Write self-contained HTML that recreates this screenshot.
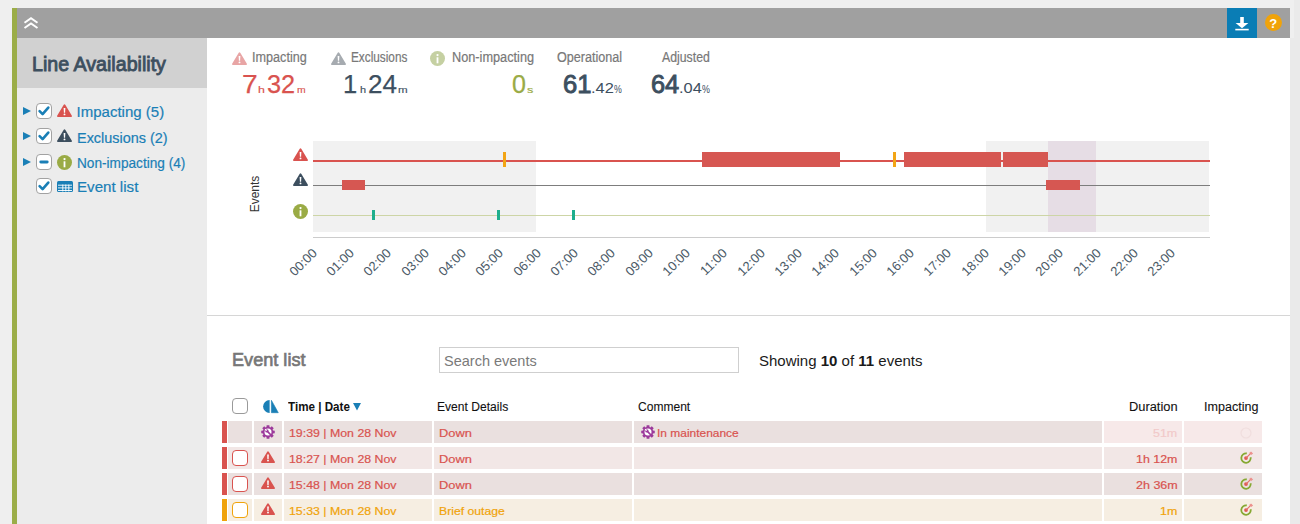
<!DOCTYPE html>
<html><head><meta charset="utf-8"><style>
html,body{margin:0;padding:0;}
body{width:1300px;height:524px;overflow:hidden;background:#efefef;position:relative;font-family:"Liberation Sans", sans-serif;}
.t{position:absolute;white-space:nowrap;}
.r{position:absolute;}
.s{position:absolute;overflow:visible;}
</style></head><body>
<div class="r" style="left:1294px;top:0px;width:6px;height:524px;background:#eaeaea;"></div>
<div class="r" style="left:1290px;top:38px;width:4px;height:486px;background:#eaeaea;"></div>
<div class="r" style="left:12px;top:8px;width:5px;height:516px;background:#9bad48;"></div>
<div class="r" style="left:17px;top:8px;width:1273px;height:30px;background:#a0a0a0;"></div>
<div class="r" style="left:17px;top:38px;width:190px;height:50px;background:#d1d1d1;"></div>
<div class="r" style="left:17px;top:88px;width:190px;height:436px;background:#ececec;"></div>
<div class="r" style="left:207px;top:38px;width:1083px;height:486px;background:#ffffff;"></div>
<svg class="s" style="left:22.5px;top:16px;" width="16" height="14" viewBox="0 0 16 14"><path d="M1.5 6.8 L8 2.3 L14.5 6.8 M1.5 12 L8 7.5 L14.5 12" fill="none" stroke="#fff" stroke-width="2"/></svg>
<div class="r" style="left:1227px;top:8px;width:30px;height:30px;background:#0a7db5;"></div>
<svg class="s" style="left:1235px;top:16px;" width="14" height="15" viewBox="0 0 14 15"><rect x="5.2" y="1" width="3.6" height="6.5" fill="#fff"/><path d="M0.6 7 H13.4 L7 12.2 Z" fill="#fff"/><rect x="0.3" y="12.8" width="13.4" height="1.6" fill="#fff"/></svg>
<svg class="s" style="left:1265px;top:14px;" width="17" height="17" viewBox="0 0 17 17"><circle cx="8.5" cy="8.5" r="8.5" fill="#f0a30a"/></svg>
<div class="t" style="top:17.00px;font-size:13px;line-height:13px;color:#fff;font-weight:700;left:1269.30px;">?</div>
<div class="t" style="left:31.59px;top:53.00px;font-size:21px;line-height:21px;color:#3d4f5f;transform:scaleX(0.9351);transform-origin:0 17.78px;-webkit-text-stroke:0.9px #3d4f5f;">Line Availability</div>
<svg class="s" style="left:23px;top:107px;" width="8" height="8" viewBox="0 0 8 8"><path d="M0 0 L8 4 L0 8 Z" fill="#1a7fb6"/></svg>
<svg class="s" style="left:36px;top:103px;" width="16" height="16" viewBox="0 0 16 16"><rect x="0.5" y="0.5" width="15" height="15" rx="3.5" fill="#fff" stroke="#a2a2a2"/><path d="M3.6 8.2 L6.6 11.2 L12.3 4.6" fill="none" stroke="#1a7fb6" stroke-width="2.6" stroke-linecap="round" stroke-linejoin="round"/></svg>
<svg class="s" style="left:57px;top:104px;" width="15" height="13" viewBox="0 0 15 13"><path d="M7.5 1.2 L14.1 12.1 H0.9 Z" fill="#d9534f" stroke="#d9534f" stroke-width="1.8" stroke-linejoin="round"/><path d="M6.65 3.9 h1.7 l-0.25 4.94 h-1.2 Z" fill="#fff"/><circle cx="7.5" cy="10.4" r="0.95" fill="#fff"/></svg>
<div class="t" style="left:76.61px;top:104.00px;font-size:15px;line-height:15px;color:#1a7fb6;-webkit-text-stroke:0.2px #1a7fb6;">Impacting (5)</div>
<svg class="s" style="left:23px;top:132px;" width="8" height="8" viewBox="0 0 8 8"><path d="M0 0 L8 4 L0 8 Z" fill="#1a7fb6"/></svg>
<svg class="s" style="left:36px;top:128px;" width="16" height="16" viewBox="0 0 16 16"><rect x="0.5" y="0.5" width="15" height="15" rx="3.5" fill="#fff" stroke="#a2a2a2"/><path d="M3.6 8.2 L6.6 11.2 L12.3 4.6" fill="none" stroke="#1a7fb6" stroke-width="2.6" stroke-linecap="round" stroke-linejoin="round"/></svg>
<svg class="s" style="left:57px;top:129px;" width="15" height="13" viewBox="0 0 15 13"><path d="M7.5 1.2 L14.1 12.1 H0.9 Z" fill="#3d4f5f" stroke="#3d4f5f" stroke-width="1.8" stroke-linejoin="round"/><path d="M6.65 3.9 h1.7 l-0.25 4.94 h-1.2 Z" fill="#fff"/><circle cx="7.5" cy="10.4" r="0.95" fill="#fff"/></svg>
<div class="t" style="left:76.82px;top:130.00px;font-size:15px;line-height:15px;color:#1a7fb6;transform:scaleX(0.9627);transform-origin:0 12.70px;-webkit-text-stroke:0.2px #1a7fb6;">Exclusions (2)</div>
<svg class="s" style="left:23px;top:158px;" width="8" height="8" viewBox="0 0 8 8"><path d="M0 0 L8 4 L0 8 Z" fill="#1a7fb6"/></svg>
<svg class="s" style="left:36px;top:154px;" width="16" height="16" viewBox="0 0 16 16"><rect x="0.5" y="0.5" width="15" height="15" rx="3.5" fill="#fff" stroke="#a2a2a2"/><path d="M4.8 8 H11.2" fill="none" stroke="#1a7fb6" stroke-width="2.9" stroke-linecap="round"/></svg>
<svg class="s" style="left:57px;top:154.5px;" width="15" height="15" viewBox="0 0 15 15"><circle cx="7.5" cy="7.5" r="7.5" fill="#9aab45"/><circle cx="7.5" cy="4.050000000000001" r="1.125" fill="#fff"/><rect x="6.6" y="6.3" width="1.7999999999999998" height="6.0" fill="#fff"/></svg>
<div class="t" style="left:76.88px;top:155.00px;font-size:15px;line-height:15px;color:#1a7fb6;transform:scaleX(0.9090);transform-origin:0 12.70px;-webkit-text-stroke:0.2px #1a7fb6;">Non-impacting (4)</div>
<svg class="s" style="left:36px;top:178px;" width="16" height="16" viewBox="0 0 16 16"><rect x="0.5" y="0.5" width="15" height="15" rx="3.5" fill="#fff" stroke="#a2a2a2"/><path d="M3.6 8.2 L6.6 11.2 L12.3 4.6" fill="none" stroke="#1a7fb6" stroke-width="2.6" stroke-linecap="round" stroke-linejoin="round"/></svg>
<svg class="s" style="left:57px;top:181px;" width="16" height="11" viewBox="0 0 16 11"><rect x="0" y="0" width="16" height="11" rx="1.5" fill="#1a7fb6"/><path d="M1 4.2 H15 M1 6.9 H15 M1 9.5 H15 M5.8 3.5 V10.5 M8.8 3.5 V10.5 M11.8 3.5 V10.5" stroke="#fff" stroke-width="0.9"/></svg>
<div class="t" style="left:76.76px;top:179.00px;font-size:15px;line-height:15px;color:#1a7fb6;transform:scaleX(1.0081);transform-origin:0 12.70px;-webkit-text-stroke:0.2px #1a7fb6;">Event list</div>
<svg class="s" style="left:232px;top:52px;" width="15" height="13" viewBox="0 0 15 13"><path d="M7.5 1.2 L14.1 12.1 H0.9 Z" fill="#e8a5a5" stroke="#e8a5a5" stroke-width="1.8" stroke-linejoin="round"/><path d="M6.65 3.9 h1.7 l-0.25 4.94 h-1.2 Z" fill="#fff"/><circle cx="7.5" cy="10.4" r="0.95" fill="#fff"/></svg>
<div class="t" style="left:251.83px;top:50.00px;font-size:14px;line-height:14px;color:#787878;transform:scaleX(0.9025);transform-origin:0 11.85px;-webkit-text-stroke:0.2px #787878;">Impacting</div>
<svg class="s" style="left:331px;top:52px;" width="15" height="13" viewBox="0 0 15 13"><path d="M7.5 1.2 L14.1 12.1 H0.9 Z" fill="#a6abb0" stroke="#a6abb0" stroke-width="1.8" stroke-linejoin="round"/><path d="M6.65 3.9 h1.7 l-0.25 4.94 h-1.2 Z" fill="#fff"/><circle cx="7.5" cy="10.4" r="0.95" fill="#fff"/></svg>
<div class="t" style="left:350.83px;top:50.00px;font-size:14px;line-height:14px;color:#787878;transform:scaleX(0.8427);transform-origin:0 11.85px;-webkit-text-stroke:0.2px #787878;">Exclusions</div>
<svg class="s" style="left:430px;top:51px;" width="15" height="15" viewBox="0 0 15 15"><circle cx="7.5" cy="7.5" r="7.5" fill="#c5d0a2"/><circle cx="7.5" cy="4.050000000000001" r="1.125" fill="#fff"/><rect x="6.6" y="6.3" width="1.7999999999999998" height="6.0" fill="#fff"/></svg>
<div class="t" style="left:451.76px;top:50.00px;font-size:14px;line-height:14px;color:#787878;transform:scaleX(0.9092);transform-origin:0 11.85px;-webkit-text-stroke:0.2px #787878;">Non-impacting</div>
<div class="t" style="left:556.90px;top:50.00px;font-size:14px;line-height:14px;color:#787878;transform:scaleX(0.9000);transform-origin:0 11.85px;-webkit-text-stroke:0.2px #787878;">Operational</div>
<div class="t" style="left:661.98px;top:50.00px;font-size:14px;line-height:14px;color:#787878;transform:scaleX(0.8776);transform-origin:0 11.85px;-webkit-text-stroke:0.2px #787878;">Adjusted</div>
<div class="t" style="left:241.66px;top:72.00px;font-size:25px;line-height:25px;color:#d9534f;transform:scaleX(1.1263);transform-origin:0 21.16px;-webkit-text-stroke:0.25px #d9534f;">7</div>
<div class="t" style="left:257.95px;top:85.00px;font-size:9.5px;line-height:9.5px;color:#d9534f;transform:scaleX(1.2975);transform-origin:0 8.04px;-webkit-text-stroke:0.15px #d9534f;">h</div>
<div class="t" style="left:267.04px;top:72.00px;font-size:25px;line-height:25px;color:#d9534f;transform:scaleX(1.0118);transform-origin:0 21.16px;-webkit-text-stroke:0.25px #d9534f;">32</div>
<div class="t" style="left:297.21px;top:85.00px;font-size:9.5px;line-height:9.5px;color:#d9534f;transform:scaleX(1.0967);transform-origin:0 8.04px;-webkit-text-stroke:0.15px #d9534f;">m</div>
<div class="t" style="left:343.46px;top:72.00px;font-size:25px;line-height:25px;color:#3d4f5f;transform:scaleX(1.0205);transform-origin:0 21.16px;-webkit-text-stroke:0.25px #3d4f5f;">1</div>
<div class="t" style="left:359.94px;top:85.00px;font-size:9.5px;line-height:9.5px;color:#3d4f5f;transform:scaleX(1.1478);transform-origin:0 8.04px;-webkit-text-stroke:0.15px #3d4f5f;">h</div>
<div class="t" style="left:367.79px;top:72.00px;font-size:25px;line-height:25px;color:#3d4f5f;transform:scaleX(1.0419);transform-origin:0 21.16px;-webkit-text-stroke:0.25px #3d4f5f;">24</div>
<div class="t" style="left:397.93px;top:85.00px;font-size:9.5px;line-height:9.5px;color:#3d4f5f;transform:scaleX(1.2169);transform-origin:0 8.04px;-webkit-text-stroke:0.15px #3d4f5f;">m</div>
<div class="t" style="left:511.72px;top:72.00px;font-size:25px;line-height:25px;color:#9aab45;transform:scaleX(1.0041);transform-origin:0 21.16px;-webkit-text-stroke:0.25px #9aab45;">0</div>
<div class="t" style="left:527.15px;top:85.00px;font-size:9.5px;line-height:9.5px;color:#9aab45;transform:scaleX(1.3278);transform-origin:0 8.04px;-webkit-text-stroke:0.15px #9aab45;">s</div>
<div class="t" style="left:562.70px;top:72.00px;font-size:25px;line-height:25px;color:#3d4f5f;font-weight:500;transform:scaleX(1.0230);transform-origin:0 21.16px;-webkit-text-stroke:0.9px #3d4f5f;">61</div>
<div class="t" style="left:590.50px;top:80.00px;font-size:15px;line-height:15px;color:#3d4f5f;transform:scaleX(1.0946);transform-origin:0 12.70px;">.42</div>
<div class="t" style="left:613.59px;top:85.00px;font-size:10px;line-height:10px;color:#3d4f5f;transform:scaleX(0.8803);transform-origin:0 8.46px;">%</div>
<div class="t" style="left:651.31px;top:72.00px;font-size:25px;line-height:25px;color:#3d4f5f;font-weight:500;transform:scaleX(1.0153);transform-origin:0 21.16px;-webkit-text-stroke:0.9px #3d4f5f;">64</div>
<div class="t" style="left:678.50px;top:80.00px;font-size:15px;line-height:15px;color:#3d4f5f;transform:scaleX(1.0923);transform-origin:0 12.70px;">.04</div>
<div class="t" style="left:701.88px;top:85.00px;font-size:10px;line-height:10px;color:#3d4f5f;transform:scaleX(0.8926);transform-origin:0 8.46px;">%</div>
<div class="r" style="left:313px;top:141px;width:223px;height:91px;background:#f1f1f1;"></div>
<div class="r" style="left:986px;top:141px;width:223px;height:91px;background:#f1f1f1;"></div>
<div class="r" style="left:1048px;top:141px;width:48px;height:91px;background:#e6dde5;"></div>
<div class="r" style="left:313px;top:160px;width:897px;height:2px;background:#d9534f;"></div>
<div class="r" style="left:313px;top:185px;width:897px;height:1px;background:#7d7d7d;"></div>
<div class="r" style="left:313px;top:215px;width:897px;height:1px;background:#cdd5a6;"></div>
<div class="r" style="left:313px;top:237px;width:897px;height:1px;background:#cccccc;"></div>
<div class="r" style="left:702px;top:152px;width:138px;height:15px;background:#d65752;"></div>
<div class="r" style="left:904px;top:152px;width:97px;height:15px;background:#d65752;"></div>
<div class="r" style="left:1003px;top:152px;width:45px;height:15px;background:#d65752;"></div>
<div class="r" style="left:503px;top:152px;width:3px;height:15px;background:#f2a516;"></div>
<div class="r" style="left:893px;top:152px;width:3px;height:15px;background:#f2a516;"></div>
<div class="r" style="left:342px;top:180px;width:23px;height:10px;background:#d65752;"></div>
<div class="r" style="left:1046px;top:180px;width:34px;height:10px;background:#d65752;"></div>
<div class="r" style="left:372px;top:210px;width:3px;height:10px;background:#1eae8d;"></div>
<div class="r" style="left:497px;top:210px;width:3px;height:10px;background:#1eae8d;"></div>
<div class="r" style="left:572px;top:210px;width:3px;height:10px;background:#1eae8d;"></div>
<svg class="s" style="left:293px;top:148px;" width="15" height="13" viewBox="0 0 15 13"><path d="M7.5 1.2 L14.1 12.1 H0.9 Z" fill="#d9534f" stroke="#d9534f" stroke-width="1.8" stroke-linejoin="round"/><path d="M6.65 3.9 h1.7 l-0.25 4.94 h-1.2 Z" fill="#fff"/><circle cx="7.5" cy="10.4" r="0.95" fill="#fff"/></svg>
<svg class="s" style="left:293px;top:173px;" width="15" height="13" viewBox="0 0 15 13"><path d="M7.5 1.2 L14.1 12.1 H0.9 Z" fill="#3d4f5f" stroke="#3d4f5f" stroke-width="1.8" stroke-linejoin="round"/><path d="M6.65 3.9 h1.7 l-0.25 4.94 h-1.2 Z" fill="#fff"/><circle cx="7.5" cy="10.4" r="0.95" fill="#fff"/></svg>
<svg class="s" style="left:293px;top:204px;" width="15" height="15" viewBox="0 0 15 15"><circle cx="7.5" cy="7.5" r="7.5" fill="#9aab45"/><circle cx="7.5" cy="4.050000000000001" r="1.125" fill="#fff"/><rect x="6.6" y="6.3" width="1.7999999999999998" height="6.0" fill="#fff"/></svg>
<div class="t" style="left:234.5px;top:187.5px;width:40px;height:12px;font-size:12px;line-height:12px;color:#333;text-align:center;transform:rotate(-90deg);">Events</div>
<div class="t" style="left:269.50px;top:245.50px;width:40px;font-size:13px;line-height:13px;color:#4b5a67;text-align:right;transform:rotate(-45deg);transform-origin:right top;">00:00</div>
<div class="t" style="left:306.83px;top:245.50px;width:40px;font-size:13px;line-height:13px;color:#4b5a67;text-align:right;transform:rotate(-45deg);transform-origin:right top;">01:00</div>
<div class="t" style="left:344.17px;top:245.50px;width:40px;font-size:13px;line-height:13px;color:#4b5a67;text-align:right;transform:rotate(-45deg);transform-origin:right top;">02:00</div>
<div class="t" style="left:381.50px;top:245.50px;width:40px;font-size:13px;line-height:13px;color:#4b5a67;text-align:right;transform:rotate(-45deg);transform-origin:right top;">03:00</div>
<div class="t" style="left:418.83px;top:245.50px;width:40px;font-size:13px;line-height:13px;color:#4b5a67;text-align:right;transform:rotate(-45deg);transform-origin:right top;">04:00</div>
<div class="t" style="left:456.17px;top:245.50px;width:40px;font-size:13px;line-height:13px;color:#4b5a67;text-align:right;transform:rotate(-45deg);transform-origin:right top;">05:00</div>
<div class="t" style="left:493.50px;top:245.50px;width:40px;font-size:13px;line-height:13px;color:#4b5a67;text-align:right;transform:rotate(-45deg);transform-origin:right top;">06:00</div>
<div class="t" style="left:530.83px;top:245.50px;width:40px;font-size:13px;line-height:13px;color:#4b5a67;text-align:right;transform:rotate(-45deg);transform-origin:right top;">07:00</div>
<div class="t" style="left:568.17px;top:245.50px;width:40px;font-size:13px;line-height:13px;color:#4b5a67;text-align:right;transform:rotate(-45deg);transform-origin:right top;">08:00</div>
<div class="t" style="left:605.50px;top:245.50px;width:40px;font-size:13px;line-height:13px;color:#4b5a67;text-align:right;transform:rotate(-45deg);transform-origin:right top;">09:00</div>
<div class="t" style="left:642.83px;top:245.50px;width:40px;font-size:13px;line-height:13px;color:#4b5a67;text-align:right;transform:rotate(-45deg);transform-origin:right top;">10:00</div>
<div class="t" style="left:680.17px;top:245.50px;width:40px;font-size:13px;line-height:13px;color:#4b5a67;text-align:right;transform:rotate(-45deg);transform-origin:right top;">11:00</div>
<div class="t" style="left:717.50px;top:245.50px;width:40px;font-size:13px;line-height:13px;color:#4b5a67;text-align:right;transform:rotate(-45deg);transform-origin:right top;">12:00</div>
<div class="t" style="left:754.83px;top:245.50px;width:40px;font-size:13px;line-height:13px;color:#4b5a67;text-align:right;transform:rotate(-45deg);transform-origin:right top;">13:00</div>
<div class="t" style="left:792.17px;top:245.50px;width:40px;font-size:13px;line-height:13px;color:#4b5a67;text-align:right;transform:rotate(-45deg);transform-origin:right top;">14:00</div>
<div class="t" style="left:829.50px;top:245.50px;width:40px;font-size:13px;line-height:13px;color:#4b5a67;text-align:right;transform:rotate(-45deg);transform-origin:right top;">15:00</div>
<div class="t" style="left:866.83px;top:245.50px;width:40px;font-size:13px;line-height:13px;color:#4b5a67;text-align:right;transform:rotate(-45deg);transform-origin:right top;">16:00</div>
<div class="t" style="left:904.17px;top:245.50px;width:40px;font-size:13px;line-height:13px;color:#4b5a67;text-align:right;transform:rotate(-45deg);transform-origin:right top;">17:00</div>
<div class="t" style="left:941.50px;top:245.50px;width:40px;font-size:13px;line-height:13px;color:#4b5a67;text-align:right;transform:rotate(-45deg);transform-origin:right top;">18:00</div>
<div class="t" style="left:978.83px;top:245.50px;width:40px;font-size:13px;line-height:13px;color:#4b5a67;text-align:right;transform:rotate(-45deg);transform-origin:right top;">19:00</div>
<div class="t" style="left:1016.17px;top:245.50px;width:40px;font-size:13px;line-height:13px;color:#4b5a67;text-align:right;transform:rotate(-45deg);transform-origin:right top;">20:00</div>
<div class="t" style="left:1053.50px;top:245.50px;width:40px;font-size:13px;line-height:13px;color:#4b5a67;text-align:right;transform:rotate(-45deg);transform-origin:right top;">21:00</div>
<div class="t" style="left:1090.83px;top:245.50px;width:40px;font-size:13px;line-height:13px;color:#4b5a67;text-align:right;transform:rotate(-45deg);transform-origin:right top;">22:00</div>
<div class="t" style="left:1128.17px;top:245.50px;width:40px;font-size:13px;line-height:13px;color:#4b5a67;text-align:right;transform:rotate(-45deg);transform-origin:right top;">23:00</div>
<div class="r" style="left:207px;top:315px;width:1083px;height:1px;background:#d6d6d6;"></div>
<div class="t" style="left:231.51px;top:350.00px;font-size:19px;line-height:19px;color:#777777;transform:scaleX(0.9537);transform-origin:0 16.08px;-webkit-text-stroke:0.7px #777777;">Event list</div>
<div class="r" style="left:439px;top:347px;width:298px;height:24px;border:1px solid #cfcfcf;background:#fff;"></div>
<div class="t" style="left:443.84px;top:353.00px;font-size:15px;line-height:15px;color:#7a7a7a;transform:scaleX(0.9666);transform-origin:0 12.70px;">Search events</div>
<div class="t" style="top:353.00px;font-size:15px;line-height:15px;color:#1a1a1a;left:759.00px;">Showing <b>10</b> of <b>11</b> events</div>
<svg class="s" style="left:232px;top:398px;" width="16" height="16" viewBox="0 0 16 16"><rect x="0.5" y="0.5" width="15" height="15" rx="3.5" fill="#fff" stroke="#9a9a9a"/></svg>
<svg class="s" style="left:263px;top:400px;" width="16" height="13" viewBox="0 0 16 13"><path d="M6.6 0 A6.5 6.5 0 0 0 6.6 13 Z" fill="#1a7fb6"/><path d="M8.4 0.3 L15.3 12.7 H8.4 Z" fill="#1a7fb6" stroke="#1a7fb6" stroke-width="0.6" stroke-linejoin="round"/></svg>
<div class="t" style="left:288.17px;top:400.00px;font-size:13px;line-height:13px;color:#111;font-weight:700;transform:scaleX(0.8955);transform-origin:0 11.00px;">Time | Date</div>
<svg class="s" style="left:353px;top:403px;" width="8" height="7.5" viewBox="0 0 8 7.5"><path d="M0 0 H8 L4 7.5 Z" fill="#1a7fb6"/></svg>
<div class="t" style="left:437.41px;top:401.00px;font-size:12.5px;line-height:12.5px;color:#111;transform:scaleX(0.9672);transform-origin:0 10.58px;-webkit-text-stroke:0.1px #111;">Event Details</div>
<div class="t" style="left:637.79px;top:401.00px;font-size:12.5px;line-height:12.5px;color:#111;transform:scaleX(0.9634);transform-origin:0 10.58px;-webkit-text-stroke:0.1px #111;">Comment</div>
<div class="t" style="left:1129.25px;top:401.00px;font-size:12.5px;line-height:12.5px;color:#111;transform:scaleX(1.0284);transform-origin:0 10.58px;-webkit-text-stroke:0.1px #111;">Duration</div>
<div class="t" style="left:1203.54px;top:401.00px;font-size:12.5px;line-height:12.5px;color:#111;transform:scaleX(1.0032);transform-origin:0 10.58px;-webkit-text-stroke:0.1px #111;">Impacting</div>
<div class="r" style="left:222px;top:421px;width:5px;height:22px;background:#d9534f;"></div>
<div class="r" style="left:228px;top:421px;width:24px;height:22px;background:#eae0df;"></div>
<div class="r" style="left:254px;top:421px;width:28px;height:22px;background:#eae0df;"></div>
<div class="r" style="left:284px;top:421px;width:148px;height:22px;background:#eae0df;"></div>
<div class="r" style="left:434px;top:421px;width:198px;height:22px;background:#eae0df;"></div>
<div class="r" style="left:634px;top:421px;width:468px;height:22px;background:#eae0df;"></div>
<div class="r" style="left:1104px;top:421px;width:78px;height:22px;background:#f7e9e9;"></div>
<div class="r" style="left:1184px;top:421px;width:78px;height:22px;background:#f7e9e9;"></div>
<svg class="s" style="left:261px;top:425px;" width="14" height="14" viewBox="0 0 14 14"><g transform="translate(7 7)"><path d="M4.97 -1.54 L6.76 -1.37 L6.76 1.37 L4.97 1.54 L4.60 2.43 L5.75 3.81 L3.81 5.75 L2.43 4.60 L1.54 4.97 L1.37 6.76 L-1.37 6.76 L-1.54 4.97 L-2.43 4.60 L-3.81 5.75 L-5.75 3.81 L-4.60 2.43 L-4.97 1.54 L-6.76 1.37 L-6.76 -1.37 L-4.97 -1.54 L-4.60 -2.43 L-5.75 -3.81 L-3.81 -5.75 L-2.43 -4.60 L-1.54 -4.97 L-1.37 -6.76 L1.37 -6.76 L1.54 -4.97 L2.43 -4.60 L3.81 -5.75 L5.75 -3.81 L4.60 -2.43 Z" fill="#9c3a9b"/><circle r="3.5" fill="#fff"/><path d="M-0.6 -0.6 L3.6 3.6" stroke="#9c3a9b" stroke-width="1.5"/><circle cx="-1.1" cy="-1.1" r="1.7" fill="#9c3a9b"/><path d="M-1.3 -1.3 L-2.9 -2.9" stroke="#fff" stroke-width="1.1"/></g></svg>
<div class="t" style="left:288.86px;top:428.00px;font-size:11.5px;line-height:11.5px;color:#d9534f;transform:scaleX(1.0731);transform-origin:0 9.73px;-webkit-text-stroke:0.2px #d9534f;">19:39 | Mon 28 Nov</div>
<div class="t" style="left:438.75px;top:428.00px;font-size:11.5px;line-height:11.5px;color:#d9534f;transform:scaleX(1.1151);transform-origin:0 9.73px;-webkit-text-stroke:0.2px #d9534f;">Down</div>
<svg class="s" style="left:641px;top:425px;" width="14" height="14" viewBox="0 0 14 14"><g transform="translate(7 7)"><path d="M4.97 -1.54 L6.76 -1.37 L6.76 1.37 L4.97 1.54 L4.60 2.43 L5.75 3.81 L3.81 5.75 L2.43 4.60 L1.54 4.97 L1.37 6.76 L-1.37 6.76 L-1.54 4.97 L-2.43 4.60 L-3.81 5.75 L-5.75 3.81 L-4.60 2.43 L-4.97 1.54 L-6.76 1.37 L-6.76 -1.37 L-4.97 -1.54 L-4.60 -2.43 L-5.75 -3.81 L-3.81 -5.75 L-2.43 -4.60 L-1.54 -4.97 L-1.37 -6.76 L1.37 -6.76 L1.54 -4.97 L2.43 -4.60 L3.81 -5.75 L5.75 -3.81 L4.60 -2.43 Z" fill="#9c3a9b"/><circle r="3.5" fill="#fff"/><path d="M-0.6 -0.6 L3.6 3.6" stroke="#9c3a9b" stroke-width="1.5"/><circle cx="-1.1" cy="-1.1" r="1.7" fill="#9c3a9b"/><path d="M-1.3 -1.3 L-2.9 -2.9" stroke="#fff" stroke-width="1.1"/></g></svg>
<div class="t" style="left:656.60px;top:428.00px;font-size:11.5px;line-height:11.5px;color:#d9534f;transform:scaleX(1.0394);transform-origin:0 9.73px;-webkit-text-stroke:0.2px #d9534f;">In maintenance</div>
<div class="t" style="left:1153.10px;top:428.00px;font-size:11.5px;line-height:11.5px;color:#f2c9c9;transform:scaleX(1.0826);transform-origin:0 9.73px;-webkit-text-stroke:0.2px #f2c9c9;">51m</div>
<svg class="s" style="left:1240px;top:427px;" width="12" height="12" viewBox="0 0 12 12"><circle cx="6" cy="6" r="5" fill="none" stroke="#f0dede" stroke-width="1.2"/></svg>
<div class="r" style="left:222px;top:447px;width:5px;height:22px;background:#d9534f;"></div>
<div class="r" style="left:228px;top:447px;width:24px;height:22px;background:#f2e7e6;"></div>
<div class="r" style="left:254px;top:447px;width:28px;height:22px;background:#f2e7e6;"></div>
<div class="r" style="left:284px;top:447px;width:148px;height:22px;background:#f2e7e6;"></div>
<div class="r" style="left:434px;top:447px;width:198px;height:22px;background:#f2e7e6;"></div>
<div class="r" style="left:634px;top:447px;width:468px;height:22px;background:#f2e7e6;"></div>
<div class="r" style="left:1104px;top:447px;width:78px;height:22px;background:#f2e7e6;"></div>
<div class="r" style="left:1184px;top:447px;width:78px;height:22px;background:#f2e7e6;"></div>
<svg class="s" style="left:232px;top:450px;" width="16" height="16" viewBox="0 0 16 16"><rect x="0.5" y="0.5" width="15" height="15" rx="3.5" fill="#fff" stroke="#d9534f"/></svg>
<svg class="s" style="left:261px;top:451px;" width="14" height="12" viewBox="0 0 14 12"><path d="M7.0 1.2 L13.1 11.1 H0.9 Z" fill="#d9534f" stroke="#d9534f" stroke-width="1.8" stroke-linejoin="round"/><path d="M6.15 3.5999999999999996 h1.7 l-0.25 4.5600000000000005 h-1.2 Z" fill="#fff"/><circle cx="7.0" cy="9.600000000000001" r="0.95" fill="#fff"/></svg>
<div class="t" style="left:288.86px;top:454.00px;font-size:11.5px;line-height:11.5px;color:#d9534f;transform:scaleX(1.0731);transform-origin:0 9.73px;-webkit-text-stroke:0.2px #d9534f;">18:27 | Mon 28 Nov</div>
<div class="t" style="left:438.75px;top:454.00px;font-size:11.5px;line-height:11.5px;color:#d9534f;transform:scaleX(1.1151);transform-origin:0 9.73px;-webkit-text-stroke:0.2px #d9534f;">Down</div>
<div class="t" style="left:1135.96px;top:454.00px;font-size:11.5px;line-height:11.5px;color:#d9534f;transform:scaleX(1.0783);transform-origin:0 9.73px;-webkit-text-stroke:0.2px #d9534f;">1h 12m</div>
<svg class="s" style="left:1240px;top:452px;" width="14" height="13" viewBox="0 0 14 13"><path d="M6.82 1.47 A4.7 4.7 0 1 0 10.63 5.28" fill="none" stroke="#86a832" stroke-width="1.8"/><circle cx="6" cy="6.1" r="1.9" fill="#e05a55"/><path d="M6 6.1 L11.2 0.9" stroke="#e46e69" stroke-width="1.1"/><path d="M9.6 0.6 L11.6 2.6 M10.6 -0.2 L12.6 1.8" stroke="#ec8c88" stroke-width="1.2"/></svg>
<div class="r" style="left:222px;top:473px;width:5px;height:22px;background:#d9534f;"></div>
<div class="r" style="left:228px;top:473px;width:24px;height:22px;background:#eae0df;"></div>
<div class="r" style="left:254px;top:473px;width:28px;height:22px;background:#eae0df;"></div>
<div class="r" style="left:284px;top:473px;width:148px;height:22px;background:#eae0df;"></div>
<div class="r" style="left:434px;top:473px;width:198px;height:22px;background:#eae0df;"></div>
<div class="r" style="left:634px;top:473px;width:468px;height:22px;background:#eae0df;"></div>
<div class="r" style="left:1104px;top:473px;width:78px;height:22px;background:#eae0df;"></div>
<div class="r" style="left:1184px;top:473px;width:78px;height:22px;background:#eae0df;"></div>
<svg class="s" style="left:232px;top:476px;" width="16" height="16" viewBox="0 0 16 16"><rect x="0.5" y="0.5" width="15" height="15" rx="3.5" fill="#fff" stroke="#d9534f"/></svg>
<svg class="s" style="left:261px;top:477px;" width="14" height="12" viewBox="0 0 14 12"><path d="M7.0 1.2 L13.1 11.1 H0.9 Z" fill="#d9534f" stroke="#d9534f" stroke-width="1.8" stroke-linejoin="round"/><path d="M6.15 3.5999999999999996 h1.7 l-0.25 4.5600000000000005 h-1.2 Z" fill="#fff"/><circle cx="7.0" cy="9.600000000000001" r="0.95" fill="#fff"/></svg>
<div class="t" style="left:288.86px;top:480.00px;font-size:11.5px;line-height:11.5px;color:#d9534f;transform:scaleX(1.0731);transform-origin:0 9.73px;-webkit-text-stroke:0.2px #d9534f;">15:48 | Mon 28 Nov</div>
<div class="t" style="left:438.75px;top:480.00px;font-size:11.5px;line-height:11.5px;color:#d9534f;transform:scaleX(1.1151);transform-origin:0 9.73px;-webkit-text-stroke:0.2px #d9534f;">Down</div>
<div class="t" style="left:1135.57px;top:480.00px;font-size:11.5px;line-height:11.5px;color:#d9534f;transform:scaleX(1.0886);transform-origin:0 9.73px;-webkit-text-stroke:0.2px #d9534f;">2h 36m</div>
<svg class="s" style="left:1240px;top:478px;" width="14" height="13" viewBox="0 0 14 13"><path d="M6.82 1.47 A4.7 4.7 0 1 0 10.63 5.28" fill="none" stroke="#86a832" stroke-width="1.8"/><circle cx="6" cy="6.1" r="1.9" fill="#e05a55"/><path d="M6 6.1 L11.2 0.9" stroke="#e46e69" stroke-width="1.1"/><path d="M9.6 0.6 L11.6 2.6 M10.6 -0.2 L12.6 1.8" stroke="#ec8c88" stroke-width="1.2"/></svg>
<div class="r" style="left:222px;top:499px;width:5px;height:22px;background:#f0a30a;"></div>
<div class="r" style="left:228px;top:499px;width:24px;height:22px;background:#f6eee2;"></div>
<div class="r" style="left:254px;top:499px;width:28px;height:22px;background:#f6eee2;"></div>
<div class="r" style="left:284px;top:499px;width:148px;height:22px;background:#f6eee2;"></div>
<div class="r" style="left:434px;top:499px;width:198px;height:22px;background:#f6eee2;"></div>
<div class="r" style="left:634px;top:499px;width:468px;height:22px;background:#f6eee2;"></div>
<div class="r" style="left:1104px;top:499px;width:78px;height:22px;background:#f6eee2;"></div>
<div class="r" style="left:1184px;top:499px;width:78px;height:22px;background:#f6eee2;"></div>
<svg class="s" style="left:232px;top:502px;" width="16" height="16" viewBox="0 0 16 16"><rect x="0.5" y="0.5" width="15" height="15" rx="3.5" fill="#fff" stroke="#f0a30a"/></svg>
<svg class="s" style="left:261px;top:503px;" width="14" height="12" viewBox="0 0 14 12"><path d="M7.0 1.2 L13.1 11.1 H0.9 Z" fill="#d9534f" stroke="#d9534f" stroke-width="1.8" stroke-linejoin="round"/><path d="M6.15 3.5999999999999996 h1.7 l-0.25 4.5600000000000005 h-1.2 Z" fill="#fff"/><circle cx="7.0" cy="9.600000000000001" r="0.95" fill="#fff"/></svg>
<div class="t" style="left:288.86px;top:506.00px;font-size:11.5px;line-height:11.5px;color:#f0a30a;transform:scaleX(1.0731);transform-origin:0 9.73px;-webkit-text-stroke:0.2px #f0a30a;">15:33 | Mon 28 Nov</div>
<div class="t" style="left:438.80px;top:506.00px;font-size:11.5px;line-height:11.5px;color:#f0a30a;transform:scaleX(1.0601);transform-origin:0 9.73px;-webkit-text-stroke:0.2px #f0a30a;">Brief outage</div>
<div class="t" style="left:1160.05px;top:506.00px;font-size:11.5px;line-height:11.5px;color:#f0a30a;transform:scaleX(1.0808);transform-origin:0 9.73px;-webkit-text-stroke:0.2px #f0a30a;">1m</div>
<svg class="s" style="left:1240px;top:504px;" width="14" height="13" viewBox="0 0 14 13"><path d="M6.82 1.47 A4.7 4.7 0 1 0 10.63 5.28" fill="none" stroke="#86a832" stroke-width="1.8"/><circle cx="6" cy="6.1" r="1.9" fill="#e05a55"/><path d="M6 6.1 L11.2 0.9" stroke="#e46e69" stroke-width="1.1"/><path d="M9.6 0.6 L11.6 2.6 M10.6 -0.2 L12.6 1.8" stroke="#ec8c88" stroke-width="1.2"/></svg>
</body></html>
